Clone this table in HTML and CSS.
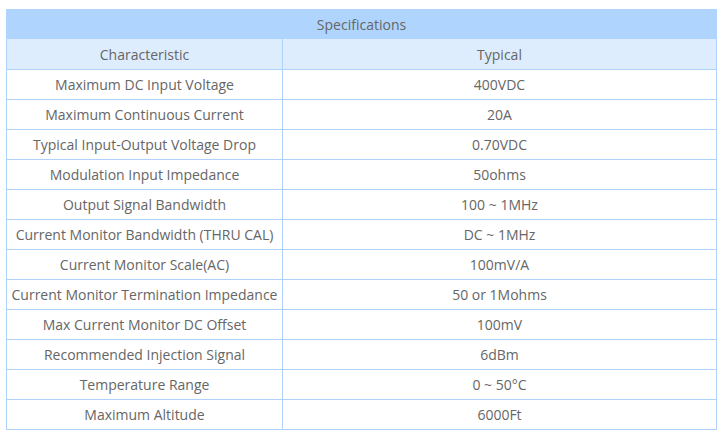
FILE: index.html
```html
<!DOCTYPE html>
<html>
<head>
<meta charset="utf-8">
<link rel="stylesheet" href="styles.css">
</head>
<body>
<div class="wrap">
<table class="spec">
  <colgroup><col class="c1"><col class="c2"></colgroup>
  <thead>
    <tr class="title"><th colspan="2">Specifications</th></tr>
    <tr class="cols"><th>Characteristic</th><th>Typical</th></tr>
  </thead>
  <tbody>
    <tr><td>Maximum DC Input Voltage</td><td>400VDC</td></tr>
    <tr><td>Maximum Continuous Current</td><td>20A</td></tr>
    <tr><td>Typical Input-Output Voltage Drop</td><td>0.70VDC</td></tr>
    <tr><td>Modulation Input Impedance</td><td>50ohms</td></tr>
    <tr><td>Output Signal Bandwidth</td><td>100 ~ 1MHz</td></tr>
    <tr><td>Current Monitor Bandwidth (THRU CAL)</td><td>DC ~ 1MHz</td></tr>
    <tr><td>Current Monitor Scale(AC)</td><td>100mV/A</td></tr>
    <tr><td>Current Monitor Termination Impedance</td><td>50 or 1Mohms</td></tr>
    <tr><td>Max Current Monitor DC Offset</td><td>100mV</td></tr>
    <tr><td>Recommended Injection Signal</td><td>6dBm</td></tr>
    <tr><td>Temperature Range</td><td>0 ~ 50°C</td></tr>
    <tr><td>Maximum Altitude</td><td>6000Ft</td></tr>
  </tbody>
</table>
</div>
</body>
</html>
```
FILE: styles.css
```css
html, body {
  margin: 0;
  padding: 0;
  background: #ffffff;
}
.wrap {
  padding: 9px 9px 0 6px;
}
.spec {
  width: 711px;
  border-collapse: collapse;
  font-family: "Open Sans", "Noto Sans", sans-serif;
  font-size: 14px;
  color: #666666;
  table-layout: fixed;
}
.spec .c1 {
  width: 276px;
}
.spec th, .spec td {
  height: 29px;
  padding: 0;
  text-align: center;
  font-weight: normal;
  border: 1px solid #aed2fc;
  line-height: 28px;
}
.spec .title th {
  background: #afd4fd;
  border-color: #afd4fd;
  border-bottom: 0;
}
.spec .cols th {
  background: #ddedfe;
  border-top-color: #ddedfe;
}
```
